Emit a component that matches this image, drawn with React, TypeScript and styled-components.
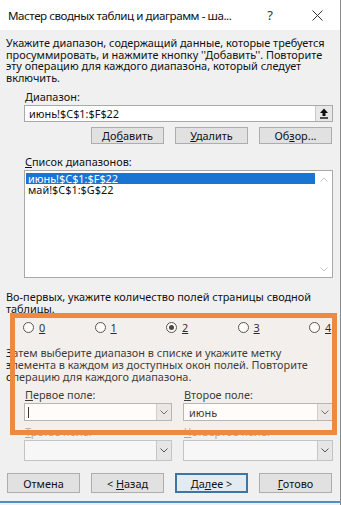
import React from "react";
import styled, { createGlobalStyle } from "styled-components";

const Global = createGlobalStyle`
  html, body { margin: 0; padding: 0; background: #ffffff; }
  body { font-family: "Noto Sans", "Open Sans", sans-serif; color: #000; }
  * { box-sizing: border-box; }
`;

const Window = styled.div`
  position: relative;
  width: 341px;
  height: 505px;
  display: flex;
  flex-direction: column;
  background: #f0f0f0;
  border-right: 1px solid #8a8a8a;
  overflow: hidden;
`;

const TitleBar = styled.div`
  height: 30px;
  flex: none;
  background: #ffffff;
  display: flex;
  align-items: center;
  padding-left: 8px;
`;

const Title = styled.div`
  font-size: 11.6px;
  letter-spacing: -0.45px;
  white-space: nowrap;
  color: #111;
  flex: 1;
`;

const TitleBtn = styled.div<{ $w: number; $mr?: number }>`
  width: ${(p) => p.$w}px;
  margin-right: ${(p) => p.$mr ?? 0}px;
  display: flex;
  justify-content: center;
  align-items: center;
  font-size: 13px;
  color: #333;
`;

const Body = styled.div`
  flex: 1;
  padding: 7px 6px 0 6px;
  display: flex;
  flex-direction: column;
  border-bottom: 2px solid #4f8fc4;
  margin-bottom: 2px;
`;

const Para = styled.div<{ $mt?: number }>`
  margin-top: ${(p) => p.$mt ?? 0}px;
  font-size: 10.9px;
  line-height: 11.7px;
  white-space: nowrap;
  color: #111;
`;

const Label = styled.div<{ $mt?: number }>`
  margin-top: ${(p) => p.$mt ?? 0}px;
  margin-left: 19px;
  font-size: 10.9px;
  line-height: 12px;
  white-space: nowrap;
  color: #111;
`;

const U = styled.span`
  text-decoration: underline;
  text-underline-offset: 1px;
`;

const InputBox = styled.div`
  margin-top: 2px;
  margin-left: 18px;
  width: 309px;
  height: 17px;
  background: #fff;
  border: 1px solid #a9a9a9;
  display: flex;
  align-items: center;
  padding-left: 4px;
  font-size: 10.9px;
  color: #111;
`;

const InputText = styled.span`
  flex: 1;
`;

const RefBtn = styled.div`
  width: 17px;
  height: 15px;
  background: #e8e8e8;
  border-left: 1px solid #c8c8c8;
  display: flex;
  align-items: center;
  justify-content: center;
`;

const BtnRow = styled.div<{ $mt: number; $justify: string }>`
  margin-top: ${(p) => p.$mt}px;
  display: flex;
  justify-content: ${(p) => p.$justify};
  gap: 11px;
  padding-right: 2px;
  padding-left: 1px;
`;

const Button = styled.div<{ $h: number; $default?: boolean }>`
  width: 73px;
  height: ${(p) => p.$h}px;
  background: ${(p) => (p.$default ? "#e3ebf2" : "#e1e1e1")};
  border: ${(p) => (p.$default ? "2px solid #3a76a6" : "1px solid #adadad")};
  display: flex;
  align-items: center;
  justify-content: center;
  font-size: 10.9px;
  color: #111;
  white-space: pre;
`;

const BtnText = styled.span`
  white-space: pre;
`;

const ListBox = styled.div`
  margin-top: 2px;
  margin-left: 18px;
  width: 309px;
  height: 108px;
  background: #fff;
  border: 1px solid #a9a9a9;
  display: flex;
  padding: 2px 0 2px 1px;
`;

const ListItems = styled.div`
  flex: 1;
  display: flex;
  flex-direction: column;
`;

const ListItem = styled.div<{ $selected?: boolean }>`
  height: 11px;
  line-height: 11px;
  padding-left: 2px;
  font-size: 10.9px;
  background: ${(p) => (p.$selected ? "#1a74d2" : "transparent")};
  color: ${(p) => (p.$selected ? "#fff" : "#111")};
`;

const ScrollBar = styled.div`
  width: 17px;
  display: flex;
  flex-direction: column;
  justify-content: space-between;
  align-items: center;
  padding: 4px 0 3px;
`;

const RadioRow = styled.div`
  margin-top: 6px;
  margin-left: 17px;
  display: grid;
  grid-template-columns: repeat(5, 71.5px);
  height: 12px;
`;

const RadioItem = styled.div`
  display: flex;
  align-items: center;
  gap: 5px;
  font-size: 10.9px;
`;

const RadioCircle = styled.div<{ $checked?: boolean }>`
  width: 11px;
  height: 11px;
  border-radius: 50%;
  border: 1px solid #333;
  background: #fff;
  display: flex;
  align-items: center;
  justify-content: center;
  &::after {
    content: "";
    display: ${(p) => (p.$checked ? "block" : "none")};
    width: 5px;
    height: 5px;
    border-radius: 50%;
    background: #222;
  }
`;

const FieldGrid = styled.div<{ $mt: number }>`
  margin-top: ${(p) => p.$mt}px;
  margin-left: 18px;
  display: grid;
  grid-template-columns: 148px 150px;
  column-gap: 11px;
`;

const FieldLabel = styled.div<{ $disabled?: boolean }>`
  font-size: 10.9px;
  line-height: 12px;
  padding-left: 1px;
  white-space: nowrap;
  color: ${(p) => (p.$disabled ? "#a8a8a8" : "#111")};
`;

const Combo = styled.div<{ $h: number; $disabled?: boolean }>`
  height: ${(p) => p.$h}px;
  background: ${(p) => (p.$disabled ? "#f7f7f7" : "#fff")};
  border: 1px solid ${(p) => (p.$disabled ? "#c4c4c4" : "#a9a9a9")};
  display: flex;
  align-items: stretch;
  font-size: 10.9px;
  color: #111;
`;

const ComboText = styled.div`
  flex: 1;
  display: flex;
  align-items: center;
  padding-left: 5px;
`;

const Caret = styled.div`
  width: 1px;
  height: 11px;
  background: #111;
  margin-left: -2px;
`;

const ComboBtn = styled.div`
  width: 15px;
  background: #e6e6e6;
  border-left: 1px solid #c6c6c6;
  display: flex;
  align-items: center;
  justify-content: center;
`;

const Highlight = styled.div`
  position: absolute;
  left: 10px;
  top: 313px;
  width: 327px;
  height: 122px;
  border: 5px solid #ed8a3f;
  background: rgba(255, 236, 220, 0.18);
  pointer-events: none;
`;

const Chevron = ({ up, color = "#555" }: { up?: boolean; color?: string }) => (
  <svg width="8" height="5" viewBox="0 0 8 5">
    <path
      d={up ? "M0.5 4.5 L4 1 L7.5 4.5" : "M0.5 0.5 L4 4 L7.5 0.5"}
      fill="none"
      stroke={color}
      strokeWidth="1"
    />
  </svg>
);

const UploadIcon = () => (
  <svg width="10" height="11" viewBox="0 0 10 11">
    <path d="M5 0.5 L9 5 L6.5 5 L6.5 8 L3.5 8 L3.5 5 L1 5 Z" fill="#111" />
    <rect x="1" y="9.3" width="8" height="1.4" fill="#111" />
  </svg>
);

const CloseIcon = () => (
  <svg width="11" height="11" viewBox="0 0 11 11">
    <path d="M0.5 0.5 L10.5 10.5 M10.5 0.5 L0.5 10.5" stroke="#333" strokeWidth="1" fill="none" />
  </svg>
);

export default function App() {
  return (
    <>
      <Global />
      <Window>
        <TitleBar>
          <Title>Мастер сводных таблиц и диаграмм - ша...</Title>
          <TitleBtn $w={20} $mr={14}>?</TitleBtn>
          <TitleBtn $w={46}>
            <CloseIcon />
          </TitleBtn>
        </TitleBar>
        <Body>
          <Para>
            Укажите диапазон, содержащий данные, которые требуется
            <br />
            просуммировать, и нажмите кнопку ''Добавить''. Повторите
            <br />
            эту операцию для каждого диапазона, который следует
            <br />
            включить.
          </Para>
          <Label $mt={7}>
            <U>Д</U>иапазон:
          </Label>
          <InputBox>
            <InputText>июнь!$C$1:$F$22</InputText>
            <RefBtn>
              <UploadIcon />
            </RefBtn>
          </InputBox>
          <BtnRow $mt={5} $justify="flex-end">
            <Button $h={17}>
              <BtnText>
                До<U>б</U>авить
              </BtnText>
            </Button>
            <Button $h={17}>
              <BtnText>
                <U>У</U>далить
              </BtnText>
            </Button>
            <Button $h={17}>
              <BtnText>
                Об<U>з</U>ор...
              </BtnText>
            </Button>
          </BtnRow>
          <Label $mt={12}>
            <U>С</U>писок диапазонов:
          </Label>
          <ListBox>
            <ListItems>
              <ListItem $selected>июнь!$C$1:$F$22</ListItem>
              <ListItem>май!$C$1:$G$22</ListItem>
            </ListItems>
            <ScrollBar>
              <Chevron up color="#c4c4c4" />
              <Chevron color="#c4c4c4" />
            </ScrollBar>
          </ListBox>
          <Para $mt={13}>
            Во-первых, укажите количество полей страницы сводной
            <br />
            таблицы.
          </Para>
          <RadioRow>
            {["0", "1", "2", "3", "4"].map((n) => (
              <RadioItem key={n}>
                <RadioCircle $checked={n === "2"} />
                <U>{n}</U>
              </RadioItem>
            ))}
          </RadioRow>
          <Para $mt={15}>
            Затем выберите диапазон в списке и укажите метку
            <br />
            элемента в каждом из доступных окон полей. Повторите
            <br />
            операцию для каждого диапазона.
          </Para>
          <FieldGrid $mt={7}>
            <FieldLabel>
              <U>П</U>ервое поле:
            </FieldLabel>
            <FieldLabel>
              <U>В</U>торое поле:
            </FieldLabel>
          </FieldGrid>
          <FieldGrid $mt={2}>
            <Combo $h={18}>
              <ComboText>
                <Caret />
              </ComboText>
              <ComboBtn>
                <Chevron />
              </ComboBtn>
            </Combo>
            <Combo $h={18}>
              <ComboText>июнь</ComboText>
              <ComboBtn>
                <Chevron />
              </ComboBtn>
            </Combo>
          </FieldGrid>
          <FieldGrid $mt={5}>
            <FieldLabel $disabled>
              <U>Т</U>ретье поле:
            </FieldLabel>
            <FieldLabel $disabled>
              <U>Ч</U>етвертое поле:
            </FieldLabel>
          </FieldGrid>
          <FieldGrid $mt={2}>
            <Combo $h={21} $disabled>
              <ComboText />
              <ComboBtn>
                <Chevron />
              </ComboBtn>
            </Combo>
            <Combo $h={21} $disabled>
              <ComboText />
              <ComboBtn>
                <Chevron />
              </ComboBtn>
            </Combo>
          </FieldGrid>
          <BtnRow $mt={12} $justify="flex-start">
            <Button $h={20}>
              <BtnText>Отмена</BtnText>
            </Button>
            <Button $h={20}>
              <BtnText>
                {"< "}
                <U>Н</U>азад
              </BtnText>
            </Button>
            <Button $h={20} $default>
              <BtnText>
                Да<U>л</U>ее {">"}
              </BtnText>
            </Button>
            <Button $h={20}>
              <BtnText>
                <U>Г</U>отово
              </BtnText>
            </Button>
          </BtnRow>
        </Body>
        <Highlight />
      </Window>
    </>
  );
}
